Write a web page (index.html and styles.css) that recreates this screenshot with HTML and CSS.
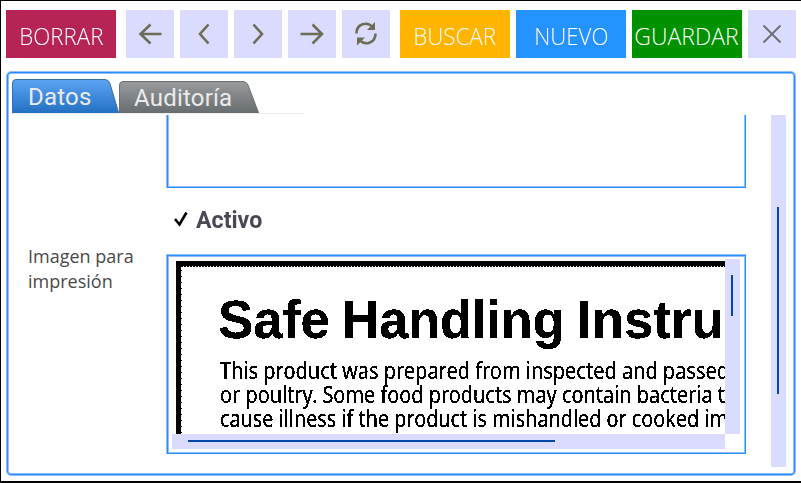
FILE: index.html
```html
<!DOCTYPE html>
<html lang="es">
<head>
<meta charset="utf-8">
<title>Datos</title>
<link rel="stylesheet" href="styles.css">
</head>
<body>
<div class="window">
  <div class="toolbar">
    <button class="btn delete"><span>BORRAR</span></button>
    <div class="nav">
      <button class="icon"><svg viewBox="0 0 48 48"><path d="M35.500 24H14M24.500 14.500 14.500 24l10 9.500"/></svg></button>
      <button class="icon"><svg viewBox="0 0 48 48"><path d="M28.500 14.500 20 24l8.500 9.500"/></svg></button>
      <button class="icon"><svg viewBox="0 0 48 48"><path d="M19.500 14.500 28 24l-8.500 9.500"/></svg></button>
      <button class="icon"><svg viewBox="0 0 48 48"><path d="M12.500 24H34M24.500 14.500 34 24l-9.500 9.500"/></svg></button>
      <button class="icon"><svg viewBox="0 0 48 48"><path d="M14.500 23.500C14.500 14 25 10.500 31 17.500M33.500 23.500C33.500 33 23 36.500 17 29.500"/><path class="solid" d="M33 12v8H25zM15 35.500V27.500H23z"/></svg></button>
    </div>
    <div class="actions">
      <button class="btn search"><span>BUSCAR</span></button>
      <button class="btn new"><span>NUEVO</span></button>
      <button class="btn save"><span>GUARDAR</span></button>
      <button class="icon close"><svg viewBox="0 0 48 48"><path d="M15.500 15.500l17 17M32.500 15.500l-17 17"/></svg></button>
    </div>
  </div>
  <div class="panel">
    <div class="tabs">
      <div class="tab active">
        <svg viewBox="0 0 107 34"><defs><linearGradient id="blue" x2="0" y2="1"><stop stop-color="#5da3f3"/><stop offset="1" stop-color="#216fc1"/></linearGradient></defs><path d="M.5 35V4Q.5.500 4 .500H93Q96.500.500 98 4.500L107 35Z" fill="url(#blue)" stroke="#3c6fa8"/></svg>
        <span>Datos</span>
      </div>
      <div class="tab">
        <svg viewBox="0 0 140 32"><defs><linearGradient id="gray" x2="0" y2="1"><stop stop-color="#999b9d"/><stop offset="1" stop-color="#666b6e"/></linearGradient></defs><path d="M.5 33V4Q.5.500 4 .500H124Q127.500.500 129 4L140 33Z" fill="url(#gray)" stroke="#6b7174"/></svg>
        <span>Auditoría</span>
      </div>
    </div>
    <div class="scroller">
      <div class="form">
        <div class="field notes"></div>
        <div class="check"><svg viewBox="0 0 14 16"><path d="M1 8l4.500 5.500L12.500 1.500"/></svg><span>Activo</span></div>
        <label class="label">Imagen para<br>impresión</label>
        <div class="field viewer">
          <svg class="picture" viewBox="0 0 553 175">
            <defs><filter id="mono" x="0" y="0" width="1" height="1"><feComponentTransfer><feFuncA type="discrete" tableValues="0 1 1"/></feComponentTransfer></filter></defs>
            <path d="M4 2H553V7H9V175H4Z"/>
            <path class="edge" d="M9 7.500H553"/>
            <path class="edge side" d="M9.500 11V175"/>
            <g filter="url(#mono)">
              <text class="title" x="46" y="79" textLength="112" lengthAdjust="spacingAndGlyphs">Safe</text>
              <text class="title" x="169.500" y="79" textLength="223" lengthAdjust="spacingAndGlyphs">Handling</text>
              <text class="title" x="405" y="79" textLength="176" lengthAdjust="spacingAndGlyphs">Instruc</text>
              <text class="copy" x="48" y="120" textLength="509" lengthAdjust="spacingAndGlyphs">This product was prepared from inspected and passed</text>
              <text class="copy" x="48" y="144" textLength="505" lengthAdjust="spacingAndGlyphs">or poultry. Some food products may contain bacteria t</text>
              <text class="copy" x="48" y="168" textLength="508" lengthAdjust="spacingAndGlyphs">cause illness if the product is mishandled or cooked im</text>
            </g>
          </svg>
          <div class="bar vertical"><i></i></div>
          <div class="bar horizontal"><i></i></div>
        </div>
      </div>
      <div class="bar page"><i></i></div>
    </div>
  </div>
</div>
</body>
</html>
```
FILE: styles.css
```css
* { box-sizing: border-box; }
body { margin: 0; background: #fff; }
.window {
  height: 483px;
  padding: 9px 5px 0;
  border: solid #000;
  border-width: 1px 0 2px 1px;
  overflow: hidden;
}
.toolbar, .nav, .actions { display: flex; }
.toolbar { gap: 10px; height: 48px; }
.nav, .actions { gap: 6px; }
button { display: flex; align-items: center; justify-content: center; padding: 0; border: 0; border-radius: 0; height: 48px; overflow: hidden; }
.btn { width: 110px; color: #fff; font: 300 23px/46px "Open Sans", sans-serif; padding-top: 3px; }
.btn span { display: block; flex: none; white-space: nowrap; transform: scaleX(.97); }
.save span { transform: none; margin-right: 1px; }
.delete { background: #b52454; }
.search { background: #ffb400; }
.new { background: #2492ff; }
.save { background: #009200; }
.icon { width: 48px; background: #dbdbff; }
.icon svg { width: 48px; height: 48px; fill: none; stroke: #6d6d55; stroke-width: 2.6; }
.icon .solid { fill: #6d6d55; stroke: none; }
.icon.close svg { stroke: #6d6d6d; stroke-width: 1.8; }
.panel {
  width: 790px;
  height: 405px;
  margin-top: 13px;
  padding: 6px 4px 0;
  border: 1px solid #92beff;
  border-radius: 5px;
  box-shadow: inset 0 0 0 1px #248eff, inset 0 0 0 2px #92beff;
}
.tabs { display: flex; align-items: flex-end; width: 292px; height: 36px; margin-left: 1px; border-bottom: 1px solid #ededed; }
.tab { display: grid; grid-template-rows: 100%; width: 140px; height: 32px; color: #ebebeb; font: 24px/35px Roboto, sans-serif; letter-spacing: .2px; }
.tab.active { width: 107px; height: 34px; }
.tab svg, .tab span { grid-area: 1 / 1; }
.tab svg { width: 100%; height: 100%; }
.tab span { padding-left: 15px; }
.active span { padding-left: 16px; line-height: 36px; }
.scroller { display: flex; justify-content: space-between; height: 352px; margin: 1px 5px 0 1px; }
.form { display: grid; grid-template: 73px 66px 200px / 154px 580px; }
.field { grid-column: 2; }
.notes { box-shadow: inset 1px 0 #92beff, inset 2px 0 #248eff, inset -1px -1px #248eff, inset 3px 0 #92beff, inset -2px -2px #92beff; }
.check { grid-column: 2; display: flex; align-items: flex-start; padding: 18px 0 0 8px; color: #494955; font: 700 24px/28px Roboto, sans-serif; }
.check svg { width: 14px; height: 16px; margin: 5px 8px 0 0; fill: none; stroke: #000; stroke-width: 2.6; }
.check span { transform: scaleX(.965); transform-origin: left; }
.label { grid-column: 1; padding-left: 16px; margin-top: -10px; color: #494949; font: 400 18px/25px "Open Sans", sans-serif; white-space: nowrap; }
.viewer {
  display: grid;
  grid-template: 175px 15px / 553px 15px;
  padding: 5px 0 0 6px;
  box-shadow: inset 1px 1px #92beff, inset 2px 2px #248eff, inset -1px -1px #248eff, inset 3px 3px #92beff, inset -2px -2px #92beff;
}
.picture { width: 553px; height: 175px; overflow: hidden; }
.title { font: 700 53px "Liberation Sans", Arial, sans-serif; }
.copy { font: 400 23px "Noto Sans", sans-serif; }
.edge { fill: none; stroke: #000; stroke-dasharray: 2 1; }
.side { stroke-dasharray: 1 5; }
.bar { background: #dbdbff; }
.bar i { display: block; background: #0049aa; }
.vertical { padding: 16px 0 0 6px; }
.vertical i { width: 2px; height: 41px; }
.horizontal { padding: 6px 0 0 16px; }
.horizontal i { width: 367px; height: 2px; }
.page { width: 15px; padding: 92px 0 0 6px; }
.page i { width: 2px; height: 187px; }
```
